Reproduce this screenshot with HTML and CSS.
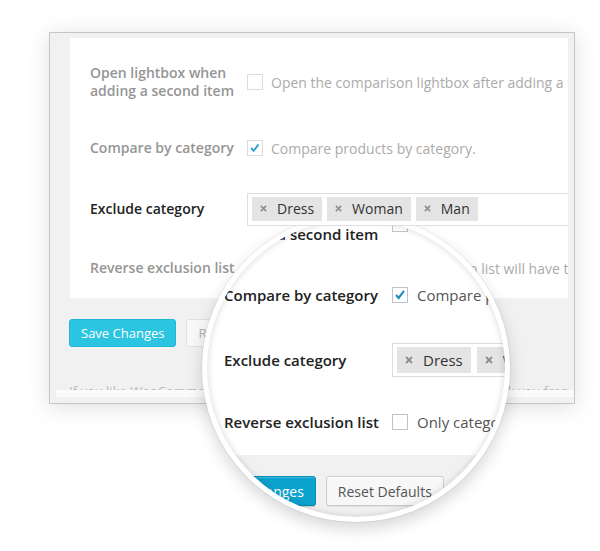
FILE: index.html
```html
<!DOCTYPE html>
<html lang="en">
<head>
    <meta charset="UTF-8">
    <meta name="viewport" content="width=device-width, initial-scale=1.0">
    <title>Compare settings</title>
    <link rel="stylesheet" href="styles.css">
</head>
<body>
    <div class="shot">
        <div class="frame">
            <div class="panel">
                <div class="label">Open lightbox when<br>adding a second item</div>
                <div class="field">
                    <span class="check"></span>
                    Open the comparison lightbox after adding a second item to compare
                </div>

                <div class="label">Compare by category</div>
                <div class="field">
                    <span class="check">
                        <svg viewBox="0 0 16 16" width="16" height="16"><path d="M3.5 8l3 3.2 5.5-7.2" fill="none" stroke="#2ea2cc" stroke-width="2.2"/></svg>
                    </span>
                    Compare products by category.
                </div>

                <div class="label label-dark">Exclude category</div>
                <div class="field">
                    <div class="select">
                        <span class="tag"><svg viewBox="0 0 8 8" width="7" height="7"><path d="M1 1l6 6M7 1l-6 6" stroke="#8e8e8e" stroke-width="1.8"/></svg>Dress</span>
                        <span class="tag"><svg viewBox="0 0 8 8" width="7" height="7"><path d="M1 1l6 6M7 1l-6 6" stroke="#8e8e8e" stroke-width="1.8"/></svg>Woman</span>
                        <span class="tag"><svg viewBox="0 0 8 8" width="7" height="7"><path d="M1 1l6 6M7 1l-6 6" stroke="#8e8e8e" stroke-width="1.8"/></svg>Man</span>
                    </div>
                </div>

                <div class="label">Reverse exclusion list</div>
                <div class="field">
                    <span class="check"></span>
                    Only categories in the exclusion list will have the compare feature
                </div>
            </div>

            <div class="actions">
                <button class="btn btn-primary">Save Changes</button>
                <button class="btn">Reset Defaults</button>
            </div>

            <div class="footnote">If you like WooCommerce Compare please leave us a rating. A huge thank you from YITH in advance!</div>
            <div class="frame-foot"></div>
        </div>

        <!-- magnifier -->
        <div class="lens">
            <div class="lens-page">
                <div class="lens-panel">
                    <div class="lens-label">Open lightbox when<br>adding a second item</div>
                    <div class="lens-field">
                        <span class="lens-check"></span>
                        Open the comparison lightbox after adding a second item
                    </div>

                    <div class="lens-label">Compare by category</div>
                    <div class="lens-field">
                        <span class="lens-check">
                            <svg viewBox="0 0 16 16" width="16" height="16"><path d="M3.5 8l3 3.4 6-8" fill="none" stroke="#1e8cbe" stroke-width="2.4"/></svg>
                        </span>
                        Compare products by category.
                    </div>

                    <div class="lens-label">Exclude category</div>
                    <div class="lens-field">
                        <div class="lens-select">
                            <span class="lens-tag"><svg viewBox="0 0 8 8" width="8" height="8"><path d="M1 1l6 6M7 1l-6 6" stroke="#8e8e8e" stroke-width="1.8"/></svg>Dress</span>
                            <span class="lens-tag"><svg viewBox="0 0 8 8" width="8" height="8"><path d="M1 1l6 6M7 1l-6 6" stroke="#8e8e8e" stroke-width="1.8"/></svg>Woman</span>
                        </div>
                    </div>

                    <div class="lens-label">Reverse exclusion list</div>
                    <div class="lens-field">
                        <span class="lens-check"></span>
                        Only categories in the exclusion list
                    </div>
                </div>

                <div class="lens-actions">
                    <button class="lens-btn lens-btn-primary">Save Changes</button>
                    <button class="lens-btn">Reset Defaults</button>
                </div>
            </div>
        </div>
    </div>
</body>
</html>
```

FILE: styles.css
```css
* {
    box-sizing: border-box;
}
body {
    margin: 0;
    background: #fff;
    font-family: "Open Sans", "Liberation Sans", Arial, sans-serif;
}
.shot {
    position: relative;
    width: 600px;
    height: 551px;
    overflow: hidden;
    padding: 32px 0 0 49px;
}

/* settings window */
.frame {
    width: 526px;
    height: 372px;
    border: 1px solid #c6c6c6;
    background: #f1f1f1;
    padding: 5px 6px 0 20px;
    box-shadow: 0 3px 22px rgba(0,0,0,0.13);
    overflow: hidden;
}
.panel {
    background: #fff;
    height: 260px;
    display: grid;
    grid-template-columns: 157px 1fr;
    grid-template-rows: 88px 44px 78px 40px;
    align-items: center;
    padding-left: 20px;
    overflow: hidden;
    white-space: nowrap;
}
.label {
    font-size: 14px;
    line-height: 18px;
    font-weight: 600;
    color: #959595;
}
.label-dark {
    color: #222;
}
.field {
    display: flex;
    align-items: center;
    font-size: 14px;
    color: #ababab;
}
.check {
    flex: none;
    width: 16px;
    height: 16px;
    margin-right: 8px;
    border: 1px solid #dcdcdc;
    display: flex;
    align-items: center;
    justify-content: center;
}
.select {
    position: relative;
    z-index: 2;
    width: 420px;
    height: 33px;
    border: 1px solid #dedede;
    background: #fff;
    padding: 3px 4px;
    display: flex;
    gap: 5px;
}
.tag {
    display: flex;
    align-items: center;
    height: 24px;
    padding: 0 8px;
    background: #e4e4e4;
    color: #333;
    font-size: 14px;
}
.tag svg {
    margin-right: 10px;
}
.actions {
    display: flex;
    gap: 10px;
    margin: 21px 0 0 -1px;
}
.btn {
    height: 28px;
    padding: 0 11px;
    font-family: inherit;
    font-size: 13px;
    border: 1px solid #e0e0e0;
    border-radius: 3px;
    background: #f8f8f8;
    color: #b0b0b0;
}
.btn-primary {
    background: #2bc5e2;
    border-color: #20b8d6;
    color: #fff;
}
.footnote {
    width: 498px;
    height: 8px;
    margin: 35px 0 0 -1px;
    overflow: hidden;
    white-space: nowrap;
    font-size: 13px;
    line-height: 18px;
    color: #b9b9b9;
}
.frame-foot {
    height: 7px;
    margin: 0 -6px 0 -14px;
    background: #fbfbfb;
}

/* magnifier */
.lens {
    position: absolute;
    left: 202px;
    top: 214px;
    width: 308px;
    height: 308px;
    border-radius: 50%;
    border: 5px solid #fff;
    background: #f1f1f1;
    overflow: hidden;
    box-shadow: 0 0 0 1px rgba(0,0,0,0.05), 0 7px 16px rgba(0,0,0,0.16);
}
.lens::after {
    content: "";
    position: absolute;
    inset: 0;
    border-radius: 50%;
    box-shadow: inset 0 0 7px rgba(0,0,0,0.16);
}
.lens-page {
    width: 420px;
    margin: -35px 0 0 -4px;
}
.lens-panel {
    background: #fff;
    display: grid;
    grid-template-columns: 168px 1fr;
    grid-template-rows: 80px 62px 68px 56px;
    align-items: center;
    padding: 0 0 5px 21px;
    white-space: nowrap;
    overflow: hidden;
}
.lens-label {
    font-size: 15px;
    line-height: 20px;
    font-weight: 600;
    color: #222;
}
.lens-field {
    display: flex;
    align-items: center;
    font-size: 15px;
    color: #555;
}
.lens-check {
    flex: none;
    width: 16px;
    height: 16px;
    margin-right: 9px;
    border: 1px solid #bfc3c7;
    display: flex;
    align-items: center;
    justify-content: center;
}
.lens-select {
    width: 300px;
    height: 34px;
    border: 1px solid #dcdcdc;
    padding: 3px 4px;
    display: flex;
    gap: 6px;
}
.lens-tag {
    display: flex;
    align-items: center;
    height: 26px;
    padding: 0 8px;
    background: #e4e4e4;
    color: #333;
    font-size: 15px;
}
.lens-tag svg {
    margin-right: 10px;
}
.lens-actions {
    display: flex;
    gap: 10px;
    margin: 21px 0 0 -1px;
}
.lens-btn {
    height: 30px;
    padding: 0 11px;
    font-family: inherit;
    font-size: 14px;
    border: 1px solid #ccc;
    border-radius: 3px;
    background: #f7f7f7;
    color: #555;
    box-shadow: inset 0 1px 0 #fff, 0 1px 0 rgba(0,0,0,0.08);
}
.lens-btn-primary {
    background: #0ca2cf;
    border-color: #0a8db8;
    color: #fff;
    box-shadow: inset 0 1px 0 rgba(120,200,230,0.5), 0 1px 0 rgba(0,0,0,0.15);
}
```
